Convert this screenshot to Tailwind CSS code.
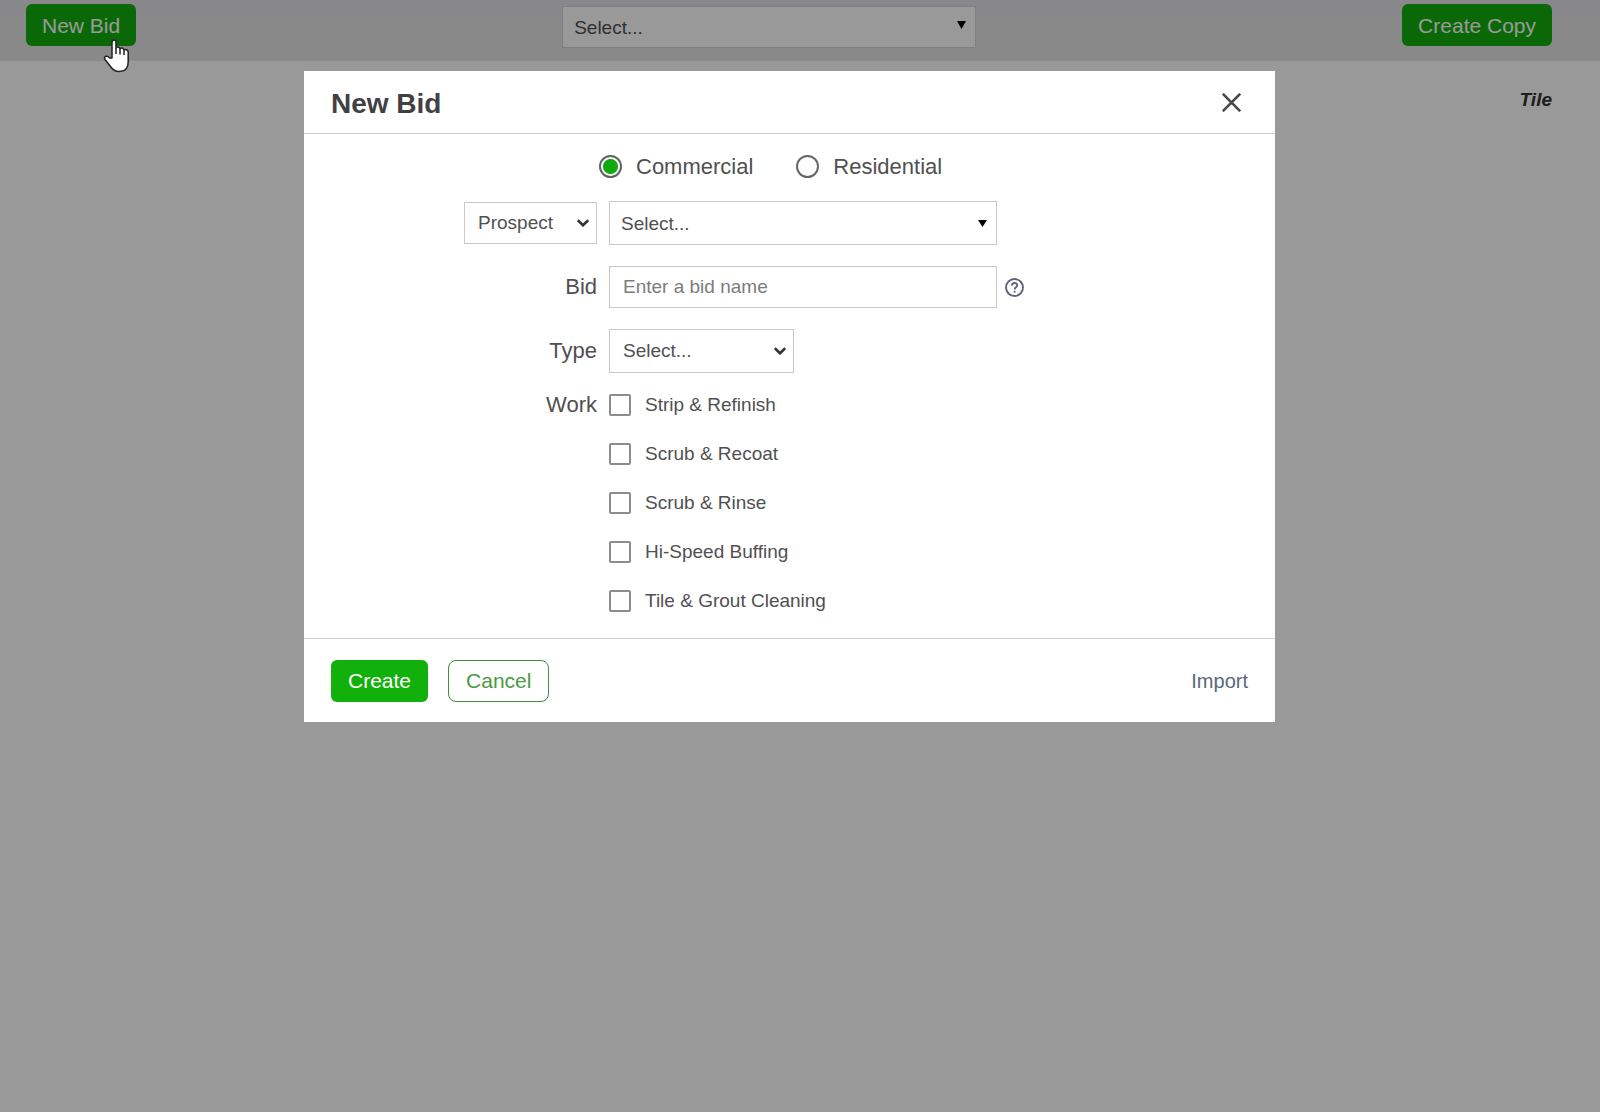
<!DOCTYPE html>
<html lang="en">
<head>
    <meta charset="UTF-8">
    <meta name="viewport" content="width=device-width, initial-scale=1.0">
    <title>New Bid</title>
    <script src="https://cdn.jsdelivr.net/npm/@tailwindcss/browser@4"></script>
</head>
<body class="min-h-screen bg-white font-['Liberation_Sans',Arial,sans-serif] text-[#505052]">
    <!-- Top bar -->
    <header class="flex h-[61px] items-start justify-between bg-linear-to-b from-[#e2e1ea] to-[#e5e5e5] to-60% pt-1 pr-12 pl-[26px]">
        <button type="button" class="h-[42px] rounded-md bg-[#12b00a] px-4 pt-0.5 text-[21px] text-white">New Bid</button>
        <div class="relative mt-0.5 w-[414px]">
            <select aria-label="Bid" class="h-[42px] w-full appearance-none border border-[#d4d4d4] bg-white px-[11px] pt-0.5 text-[19px]">
                <option>Select...</option>
            </select>
            <svg class="pointer-events-none absolute top-[15px] right-2.5 h-2 w-[9px]" viewBox="0 0 9 8" fill="#000"><path d="M0 0h9L4.500 8z"/></svg>
        </div>
        <button type="button" class="h-[42px] rounded-md bg-[#12b00a] px-4 pt-0.5 text-[21px] text-white">Create Copy</button>
    </header>

    <main class="flex justify-end pt-[27px] pr-12">
        <p class="text-[19px] leading-6 font-bold text-[#333] italic">Tile</p>
    </main>

    <!-- Overlay -->
    <div class="fixed inset-0 overflow-y-auto bg-black/40 pt-[71px] pr-[21px]">
        <form role="dialog" aria-labelledby="dialog-title" class="mx-auto w-full max-w-[971px] bg-white">
            <div class="flex h-[63px] items-center justify-between border-b border-[#d0d0d0] pr-[34px] pl-[27px]">
                <h1 id="dialog-title" class="pt-1 text-[28px] leading-8 font-bold text-[#414144]">New Bid</h1>
                <button type="button" aria-label="Close">
                    <svg class="size-[19px]" viewBox="0 0 19 19" fill="none" stroke="#48484b" stroke-width="2.600"><path d="M.8.8l17.400 17.400M18.200.8L.8 18.200"/></svg>
                </button>
            </div>

            <div class="grid grid-cols-[293px_1fr] gap-x-3 gap-y-[21px] pt-[19px] pb-[26px]">
                <div class="col-span-2 flex h-[27px] items-center gap-[43px] pl-[295px] text-[22px]">
                    <label class="flex items-center gap-3.5">
                        <input type="radio" name="kind" checked class="size-[23px] appearance-none rounded-full border-2 border-[#5d665d] checked:bg-[radial-gradient(circle,#12a80c_7px,#fff_8px)]">
                        Commercial
                    </label>
                    <label class="flex items-center gap-3.5">
                        <input type="radio" name="kind" class="size-[23px] appearance-none rounded-full border-2 border-[#666] checked:bg-[radial-gradient(circle,#12a80c_7px,#fff_8px)]">
                        Residential
                    </label>
                </div>

                <div class="relative w-[133px] self-center justify-self-end">
                    <select aria-label="Customer type" class="h-[42px] w-full appearance-none border border-[#c8c8c8] bg-white px-[13px] text-[19px]">
                        <option>Prospect</option>
                        <option>Customer</option>
                    </select>
                    <svg class="pointer-events-none absolute top-[17px] right-2 h-2 w-3" viewBox="0 0 12 8" fill="none" stroke="#333" stroke-width="2.600"><path d="M.8 1.200L6 6.300l5.200-5.100"/></svg>
                </div>
                <div class="relative w-[388px]">
                    <select aria-label="Prospect" class="h-11 w-full appearance-none border border-[#c8c8c8] bg-white px-[11px] pt-0.5 text-[19px]">
                        <option>Select...</option>
                    </select>
                    <svg class="pointer-events-none absolute top-[19px] right-2.5 h-[7px] w-[9px]" viewBox="0 0 9 7" fill="#000"><path d="M0 0h9L4.500 7z"/></svg>
                </div>

                <label for="bid-name" class="self-center pb-0.5 text-right text-[22px]">Bid</label>
                <div class="flex items-center gap-2">
                    <input id="bid-name" type="text" placeholder="Enter a bid name" class="h-[42px] w-[388px] border border-[#c8c8c8] px-[13px] text-[19px] placeholder:text-[#7c7c7c]">
                    <button type="button" aria-label="Help">
                        <svg class="size-[19px]" viewBox="0 0 19 19" fill="none" stroke="#5f6478" stroke-width="1.900"><circle cx="9.500" cy="9.500" r="8.500"/><path d="M6.900 7.600C6.900 5.900 8 5 9.500 5s2.700 1 2.700 2.400c0 1.900-2.600 2-2.600 4.100"/><path d="M9.600 12.800v1.800"/></svg>
                    </button>
                </div>

                <label for="floor-type" class="self-center pb-0.5 text-right text-[22px]">Type</label>
                <div class="relative w-[185px]">
                    <select id="floor-type" class="h-11 w-full appearance-none border border-[#c8c8c8] bg-white px-[13px] text-[19px]">
                        <option>Select...</option>
                    </select>
                    <svg class="pointer-events-none absolute top-[18px] right-2 h-2 w-3" viewBox="0 0 12 8" fill="none" stroke="#333" stroke-width="2.600"><path d="M.8 1.200L6 6.300l5.200-5.100"/></svg>
                </div>

                <div id="work-label" class="text-right text-[22px] leading-[22px]">Work</div>
                <div role="group" aria-labelledby="work-label" class="flex flex-col items-start gap-[27px] text-[19px] leading-[22px]">
                    <label class="flex items-center gap-3.5"><input type="checkbox" class="size-[22px] appearance-none rounded-xs border-2 border-[#8c8c8c] checked:bg-[#12b00a]">Strip &amp; Refinish</label>
                    <label class="flex items-center gap-3.5"><input type="checkbox" class="size-[22px] appearance-none rounded-xs border-2 border-[#8c8c8c] checked:bg-[#12b00a]">Scrub &amp; Recoat</label>
                    <label class="flex items-center gap-3.5"><input type="checkbox" class="size-[22px] appearance-none rounded-xs border-2 border-[#8c8c8c] checked:bg-[#12b00a]">Scrub &amp; Rinse</label>
                    <label class="flex items-center gap-3.5"><input type="checkbox" class="size-[22px] appearance-none rounded-xs border-2 border-[#8c8c8c] checked:bg-[#12b00a]">Hi-Speed Buffing</label>
                    <label class="flex items-center gap-3.5"><input type="checkbox" class="size-[22px] appearance-none rounded-xs border-2 border-[#8c8c8c] checked:bg-[#12b00a]">Tile &amp; Grout Cleaning</label>
                </div>
            </div>

            <div class="flex items-center border-t border-[#d0d0d0] px-[27px] pt-[21px] pb-5">
                <button type="submit" class="h-[42px] rounded-md bg-[#12b00a] px-[17px] text-[21px] text-white">Create</button>
                <button type="button" class="ml-5 h-[42px] rounded-lg border border-[#3f8f3f] px-[17px] text-[21px] text-[#4a9a45]">Cancel</button>
                <a href="#" class="ml-auto text-xl text-[#5c6878]">Import</a>
            </div>
        </form>
    </div>

    <!-- Pointer -->
    <svg class="pointer-events-none absolute top-[39px] left-[103px] h-[34px] w-[27px]" viewBox="0 0 27 34" fill="#fff" stroke="#222" stroke-width="1.500" stroke-linejoin="round"><path d="M9 19V3.500C9 1.700 9.800 1 11 1s2 .8 2 2.500V9c.4-.6 1-.9 1.700-.9 1.200 0 2 .7 2.200 1.700.4-.5 1-.7 1.700-.7 1.200 0 2 .7 2.200 1.700.4-.3.9-.4 1.500-.4 1.700 0 2.900 1.100 2.900 2.800V23c0 6-3.500 9.500-9.200 9.500-4.500 0-6.500-2-8.500-5L2 20.500c-.9-1.500-.4-2.800.8-3.200 1.500-.4 2.700.3 3.800 1.600z"/><path fill="none" d="M13 9v6M17 10v5.500M21 11v5"/></svg>
</body>
</html>
